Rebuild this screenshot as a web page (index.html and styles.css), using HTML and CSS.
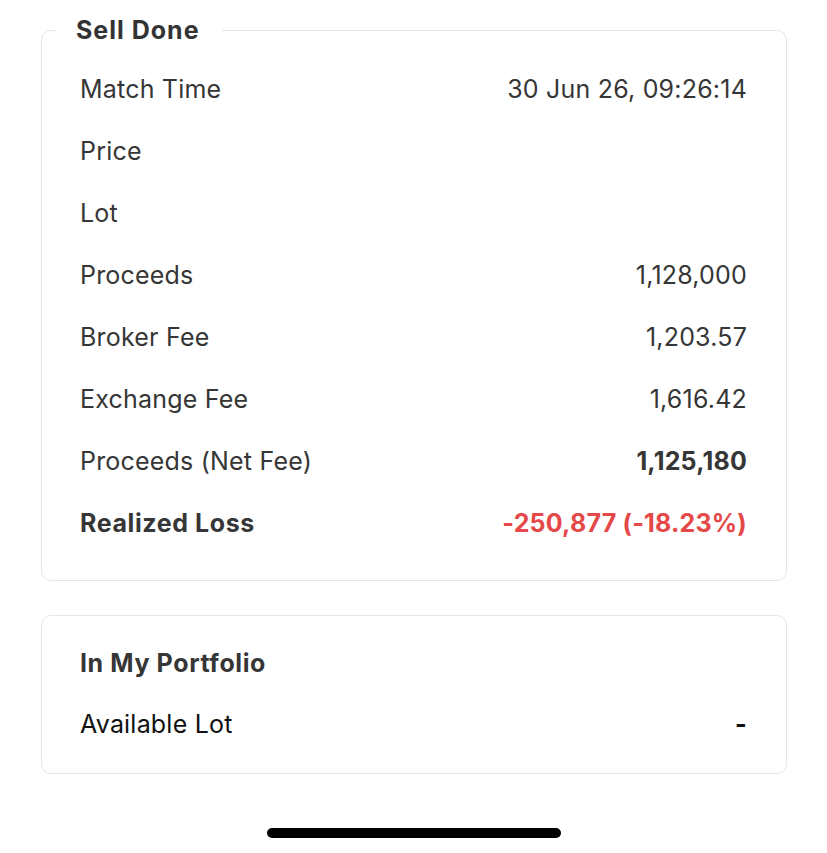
FILE: index.html
```html
<!DOCTYPE html>
<html lang="en">
<head>
    <meta charset="UTF-8">
    <meta name="viewport" content="width=device-width, initial-scale=1.0">
    <title>Order Detail</title>
    <link rel="stylesheet" href="styles.css">
</head>
<body>
    <div class="page">
        <fieldset class="card">
            <legend>Sell Done</legend>
            <div class="row">
                <span class="label">Match Time</span>
                <span class="value">30 Jun 26, 09:26:14</span>
            </div>
            <div class="row">
                <span class="label">Price</span>
                <span class="value"></span>
            </div>
            <div class="row">
                <span class="label">Lot</span>
                <span class="value"></span>
            </div>
            <div class="row">
                <span class="label">Proceeds</span>
                <span class="value">1,128,000</span>
            </div>
            <div class="row">
                <span class="label">Broker Fee</span>
                <span class="value">1,203.57</span>
            </div>
            <div class="row">
                <span class="label">Exchange Fee</span>
                <span class="value">1,616.42</span>
            </div>
            <div class="row">
                <span class="label">Proceeds (Net Fee)</span>
                <span class="value bold">1,125,180</span>
            </div>
            <div class="row">
                <span class="label bold">Realized Loss</span>
                <span class="value bold loss">-250,877 (-18.23%)</span>
            </div>
        </fieldset>

        <div class="card portfolio">
            <div class="row">
                <span class="label bold">In My Portfolio</span>
            </div>
            <div class="row">
                <span class="label dark">Available Lot</span>
                <span class="value dark bold">-</span>
            </div>
        </div>

        <div class="home-indicator"></div>
    </div>
</body>
</html>
```

FILE: styles.css
```css
body {
    margin: 0;
    background-color: #fff;
    font-family: Inter, 'Open Sans', sans-serif;
    color: #363636;
}
.page {
    width: 827px;
    padding: 15px 40px 0 41px;
    box-sizing: border-box;
}
.card {
    margin: 0;
    min-width: 0;
    border: 1px solid #e6e6e6;
    border-radius: 10px;
    background-color: #fff;
}
fieldset.card {
    padding: 13px 39px 26px 38px;
}
fieldset.card legend {
    margin-left: -24px;
    padding: 0 22px 0 20px;
    font-size: 25px;
    font-weight: 700;
    letter-spacing: 1px;
    line-height: 30px;
    color: #333;
}
.portfolio {
    margin-top: 34px;
    padding: 16px 39px 19px 38px;
}
.portfolio .row + .row {
    height: 60px;
}
.row {
    display: flex;
    justify-content: space-between;
    align-items: center;
    height: 62px;
    font-size: 25px;
    letter-spacing: 0.2px;
}
.bold {
    font-weight: 700;
}
.label.bold {
    letter-spacing: 0.6px;
}
.dark {
    color: #111;
}
.loss {
    color: #e54848;
}
.home-indicator {
    width: 294px;
    height: 10px;
    border-radius: 5px;
    background-color: #000;
    margin: 54px auto 0;
}
```
